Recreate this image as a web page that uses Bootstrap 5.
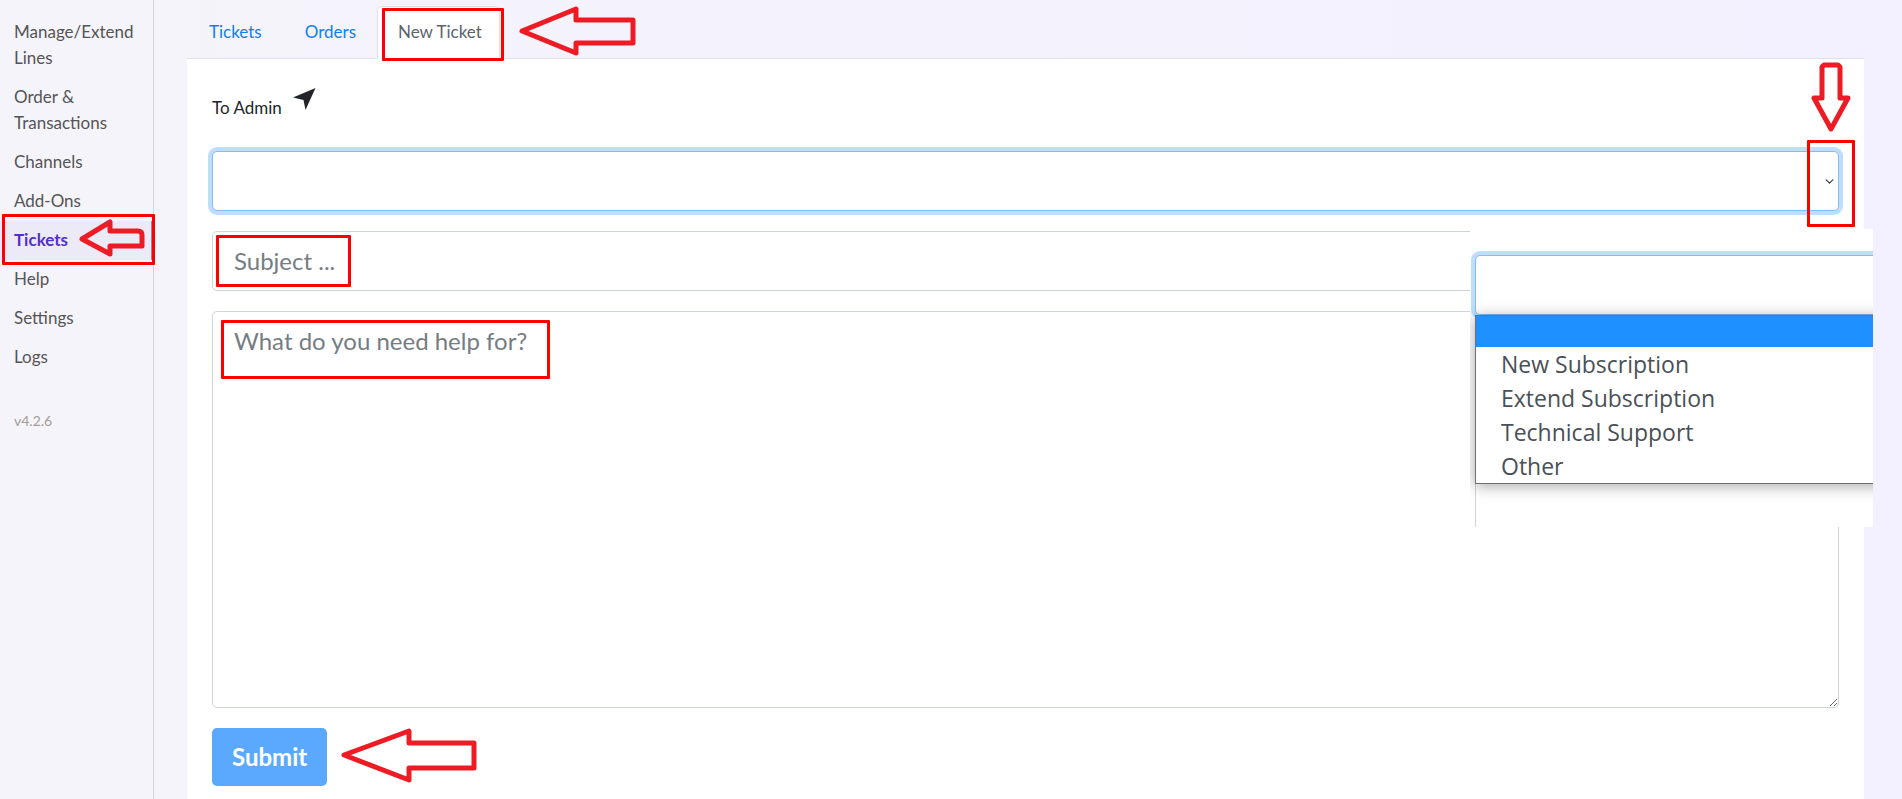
<!DOCTYPE html>
<html lang="en">
<head>
<meta charset="utf-8">
<meta name="viewport" content="width=device-width, initial-scale=1">
<title>New Ticket</title>
<link href="https://cdn.jsdelivr.net/npm/bootstrap@5.3.0/dist/css/bootstrap.min.css" rel="stylesheet">
<style>
  body {
    font-family: Lato, "Open Sans", sans-serif;
    font-size: 17px;
    line-height: 26px;
    color: #212529;
    background: linear-gradient(90deg, #f5f4fa, #f3f0ff);
  }

  /* Side menu */
  .side-menu { width: 154px; border-right: 1px solid #d5d4da; background: #f5f4fa; padding-top: 13px; }
  .side-menu .nav-link { color: #555; padding: 6px 12px 7px 14px; }
  .side-menu .nav-link.active { color: #5130cc; font-weight: 700; background: #edeaf8; box-shadow: inset -2px 0 #8f83c4; }
  .version { font-size: 14px; color: #a39d95; padding: 31px 14px; }

  /* Tabs and panel */
  .page-body { padding: 6px 38px 0 33px; }
  .ticket-tabs { border-color: #dee2e6; }
  .ticket-tabs .nav-link { color: #0d7ff5; padding: 12px 20px 13px 21px; border-radius: 5px 5px 0 0; }
  .ticket-tabs .nav-link.active { color: #5c636a; background: #fff; padding: 12px 17px 13px 20px; }
  .panel { background: #fff; padding: 25px; }
  .to-admin { gap: 11px; height: 67px; padding-top: 4px; }
  .to-admin label { padding-top: 7px; }

  /* Form fields */
  .field, .submit { font-size: 24px; line-height: 36px; border-radius: 5px; }
  .field { padding: 11px 21px; border-color: #ced4da; color: #495057; }
  .field::placeholder { color: #757d84; }
  .picker { height: 60px; border-color: #80bdff; box-shadow: 0 0 0 4px #bfdeff; background-size: 9px; background-position: right 4px center; }
  .picker:focus { border-color: #80bdff; box-shadow: 0 0 0 4px #bfdeff; }
  .message { height: 397px; }
  .submit, .submit:hover { color: #fff; font-weight: 700; background: #5ba9ff; border: 0; padding: 11px 20px; }

  /* Opened list laid over the form */
  .open-list { right: -9px; top: 170px; width: 403px; height: 298px; background: #fff; overflow: hidden; padding: 26px 0 0 5px; }
  .open-list .picker { width: 500px; }
  .open-list ul { font-family: "Open Sans", sans-serif; font-size: 23px; line-height: 34px; width: 500px; color: #4a5056; background: #fff; border: 1px solid #707070; box-shadow: 0 2px 14px rgba(0, 0, 0, .35); }
  .open-list li { padding-left: 25px; height: 34px; }
  .open-list .picked { height: 31px; background: #1e90ff; }
  .list-tail { height: 60px; border-left: 1px solid #ced4da; }

  /* Red call-outs */
  .frame, .arrow { position: absolute; pointer-events: none; z-index: 5; }
  .frame { border: 3px solid #f00; border-radius: 1px; }
  .arrow { fill: none; stroke: #ed1c24; stroke-width: 5; stroke-linejoin: round; }
  .frame-menu { inset: -7px -2px -5px 2px; }
  .frame-tab { inset: 2px -4px -3px 5px; }
  .frame-subject { left: 4px; top: 4px; width: 135px; height: 52px; }
  .frame-message { left: 9px; top: 9px; width: 329px; height: 59px; }
  .frame-caret { right: -16px; top: -11px; width: 48px; height: 87px; }
  .arrow-menu { left: 79px; top: -3px; }
  .arrow-tab { left: calc(100% + 19px); top: 0; }
  .arrow-caret { right: -12px; top: -89px; }
  .arrow-submit { left: calc(100% + 14px); top: 0; }
</style>
</head>
<body>
<div class="d-flex min-vh-100">
  <nav class="side-menu flex-shrink-0" aria-label="Main">
    <ul class="nav flex-column">
      <li class="nav-item"><a class="nav-link" href="#">Manage/Extend Lines</a></li>
      <li class="nav-item"><a class="nav-link" href="#">Order &amp; Transactions</a></li>
      <li class="nav-item"><a class="nav-link" href="#">Channels</a></li>
      <li class="nav-item"><a class="nav-link" href="#">Add-Ons</a></li>
      <li class="nav-item position-relative">
        <a class="nav-link active" href="#" aria-current="page">Tickets</a>
        <span class="frame frame-menu"></span>
        <svg class="arrow arrow-menu" width="66" height="42" viewBox="0 0 66 42"><path d="M3 21L31 4V13H59q4 0 4 4V28H31V36Z"/></svg>
      </li>
      <li class="nav-item"><a class="nav-link" href="#">Help</a></li>
      <li class="nav-item"><a class="nav-link" href="#">Settings</a></li>
      <li class="nav-item"><a class="nav-link" href="#">Logs</a></li>
    </ul>
    <div class="version">v4.2.6</div>
  </nav>

  <main class="page-body d-flex flex-column flex-grow-1">
    <ul class="nav nav-tabs ticket-tabs">
      <li class="nav-item"><a class="nav-link" href="#">Tickets</a></li>
      <li class="nav-item"><a class="nav-link" href="#">Orders</a></li>
      <li class="nav-item position-relative">
        <a class="nav-link active" href="#" aria-current="page">New Ticket</a>
        <span class="frame frame-tab"></span>
        <svg class="arrow arrow-tab" width="120" height="52" viewBox="0 0 120 52"><path d="M3 25L57 3V14H114V37H57V47Z"/></svg>
      </li>
    </ul>

    <form class="panel position-relative flex-grow-1">
      <div class="to-admin d-flex">
        <label for="topic">To Admin</label>
        <svg width="23" height="23" viewBox="0 0 23 23" fill="#212529" aria-hidden="true"><path d="M22.500 0L12.500 22L10.500 12L0 9.500Z"/></svg>
      </div>

      <div class="position-relative mb-3 pb-1">
        <select class="form-select field picker" id="topic"><option></option></select>
        <span class="frame frame-caret"></span>
        <svg class="arrow arrow-caret" width="40" height="72" viewBox="0 0 40 72"><path d="M13 3H27L29 5V36H37L20 67L3 36H11V5Z"/></svg>
      </div>

      <div class="position-relative mb-3 pb-1">
        <input class="form-control field" type="text" placeholder="Subject ..." aria-label="Subject">
        <span class="frame frame-subject"></span>
      </div>

      <div class="position-relative mb-3 pb-1">
        <textarea class="form-control field message" placeholder="What do you need help for?" aria-label="Message"></textarea>
        <span class="frame frame-message"></span>
      </div>

      <div class="position-relative d-inline-block">
        <button class="btn submit" type="button">Submit</button>
        <svg class="arrow arrow-submit" width="136" height="56" viewBox="0 0 136 56"><path d="M3 27L68 3V15H133V40H68V52Z"/></svg>
      </div>

      <div class="open-list position-absolute">
        <select class="form-select field picker" aria-label="Topic"><option></option></select>
        <ul class="list-unstyled mb-0 position-relative" role="listbox" aria-label="Topics">
          <li class="picked" role="option" aria-selected="true"></li>
          <li role="option">New Subscription</li>
          <li role="option">Extend Subscription</li>
          <li role="option">Technical Support</li>
          <li role="option">Other</li>
        </ul>
        <div class="list-tail"></div>
      </div>
    </form>
  </main>
</div>
<script src="https://cdn.jsdelivr.net/npm/bootstrap@5.3.0/dist/js/bootstrap.bundle.min.js"></script>
</body>
</html>
